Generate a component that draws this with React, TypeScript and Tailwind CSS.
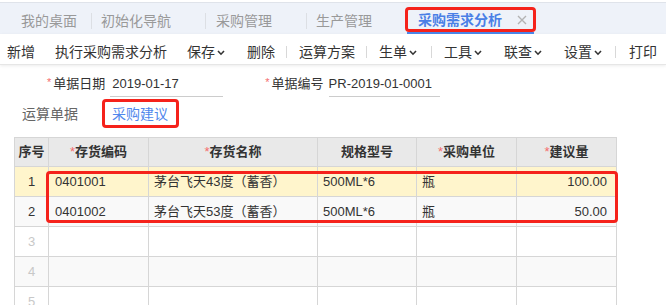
import React from 'react';

const Chevron: React.FC = () => (
  <svg width="8" height="6" viewBox="0 0 8 6" className="ml-[2px] mt-[3px]">
    <polyline points="1,1 4,4.2 7,1" fill="none" stroke="#333" strokeWidth="1.6" />
  </svg>
);

const ToolSep: React.FC<{ ml: string }> = ({ ml }) => (
  <span className={`${ml} w-px h-[12px] bg-[#d8d8d8]`} />
);

const rows = [
  { no: 1, code: '0401001', name: '茅台飞天43度（蓄香）', spec: '500ML*6', unit: '瓶', qty: '100.00' },
  { no: 2, code: '0401002', name: '茅台飞天53度（蓄香）', spec: '500ML*6', unit: '瓶', qty: '50.00' },
  { no: 3 },
  { no: 4 },
  { no: 5 },
  { no: 6 },
] as { no: number; code?: string; name?: string; spec?: string; unit?: string; qty?: string }[];

const App: React.FC = () => {
  return (
    <div className="w-[666px] h-[305px] overflow-hidden bg-white text-[#333] font-['Liberation_Sans','Noto_Sans_CJK_SC',sans-serif]">
      {/* top tab bar */}
      <div className="pt-[2px]">
        <div className="h-[32px] border-t border-[#dfe3ea] bg-[#eef2f9] flex items-start text-[14px] leading-[20px] text-[#999]">
          <span className="ml-[21px] mt-[8px]">我的桌面</span>
          <span className="ml-[14px] mt-[10px] w-px h-[16px] bg-[#dcdfe4]" />
          <span className="ml-[9px] mt-[8px]">初始化导航</span>
          <span className="ml-[34px] mt-[10px] w-px h-[16px] bg-[#dcdfe4]" />
          <span className="ml-[10px] mt-[8px]">采购管理</span>
          <span className="ml-[34px] mt-[10px] w-px h-[16px] bg-[#dcdfe4]" />
          <span className="ml-[9px] mt-[8px]">生产管理</span>
          <div className="ml-[33px] mt-[4px] flex flex-col">
            <div className="h-[25px] w-[131px] border-[3px] border-[#f5221b] rounded-[4px] flex items-center pl-[10px]">
              <span className="text-[#4a7fe6] font-bold">采购需求分析</span>
              <svg width="10" height="10" viewBox="0 0 10 10" className="ml-[15px]">
                <path d="M1 1 L9 9 M9 1 L1 9" stroke="#b3b3b3" strokeWidth="1.4" />
              </svg>
            </div>
            <div className="mx-[2px] h-[2px] bg-[#4a86e8]" />
          </div>
        </div>
      </div>

      {/* toolbar */}
      <div className="h-[31px] pt-[5px] flex items-center text-[14px] leading-[20px] border-b border-[#e6e6e6] shadow-[0_1px_3px_rgba(0,0,0,0.08)] whitespace-nowrap">
        <span className="ml-[7px]">新增</span>
        <span className="ml-[20px]">执行采购需求分析</span>
        <span className="ml-[20px] flex items-center">保存<Chevron /></span>
        <span className="ml-[22px]">删除</span>
        <ToolSep ml="ml-[11px]" />
        <span className="ml-[12px]">运算方案</span>
        <ToolSep ml="ml-[11px]" />
        <span className="ml-[12px] flex items-center">生单<Chevron /></span>
        <ToolSep ml="ml-[14px]" />
        <span className="ml-[12px] flex items-center">工具<Chevron /></span>
        <span className="ml-[22px] flex items-center">联查<Chevron /></span>
        <span className="ml-[22px] flex items-center">设置<Chevron /></span>
        <ToolSep ml="ml-[13px]" />
        <span className="ml-[13px]">打印</span>
      </div>

      {/* form fields */}
      <div className="pt-[10px] flex items-start text-[13px] leading-[18px]">
        <div className="ml-[47px] flex items-start">
          <span className="text-[#f56c6c] text-[11px] leading-[14px]">*</span>
          <span className="ml-[2px]">单据日期</span>
          <div className="ml-[5px] w-[113px] pl-[2px] pb-[3px] border-b border-[#cccccc]">2019-01-17</div>
        </div>
        <div className="ml-[42px] flex items-start">
          <span className="text-[#f56c6c] text-[11px] leading-[14px]">*</span>
          <span className="ml-[2px]">单据编号</span>
          <div className="ml-[5px] w-[111px] pb-[3px] border-b border-[#cccccc]">PR-2019-01-0001</div>
        </div>
      </div>

      {/* sub tabs */}
      <div className="mt-[2px] h-[29px] flex items-center text-[14px] leading-[20px]">
        <span className="ml-[22px] text-[#666]">运算单据</span>
        <div className="ml-[24px] h-[29px] border-[3px] border-[#f5221b] rounded-[4px] flex items-center pl-[7px] pr-[8px]">
          <span className="text-[#4f87ec]">采购建议</span>
        </div>
      </div>

      {/* grid */}
      <div className="relative ml-[14px] mt-[9px] w-[602px]">
        <table className="table-fixed border-collapse w-[602px] text-[13px] leading-[18px]">
          <colgroup>
            <col className="w-[34px]" />
            <col className="w-[100px]" />
            <col className="w-[169px]" />
            <col className="w-[99px]" />
            <col className="w-[100px]" />
            <col className="w-[100px]" />
          </colgroup>
          <thead>
            <tr className="h-[29px] bg-[#e9e9e9]">
              <th className="border border-[#d6d6d6] font-bold">序号</th>
              <th className="border border-[#d6d6d6] font-bold"><span className="text-[#f56c6c] font-normal">*</span>存货编码</th>
              <th className="border border-[#d6d6d6] font-bold"><span className="text-[#f56c6c] font-normal">*</span>存货名称</th>
              <th className="border border-[#d6d6d6] font-bold">规格型号</th>
              <th className="border border-[#d6d6d6] font-bold"><span className="text-[#f56c6c] font-normal">*</span>采购单位</th>
              <th className="border border-[#d6d6d6] font-bold"><span className="text-[#f56c6c] font-normal">*</span>建议量</th>
            </tr>
          </thead>
          <tbody>
            {rows.map(r => (
              <tr
                key={r.no}
                className={
                  r.no === 1 ? 'h-[30px] bg-[#fff5cc]' : r.no % 2 === 0 ? 'h-[30px] bg-[#f9f9f9]' : 'h-[30px] bg-white'
                }>
                <td className={`border border-[#d6d6d6] text-center ${r.code ? 'text-[#333]' : 'text-[#c8c8c8]'}`}>{r.no}</td>
                <td className="border border-[#d6d6d6] pl-[6px]">{r.code}</td>
                <td className="border border-[#d6d6d6] pl-[5px] whitespace-nowrap">{r.name}</td>
                <td className="border border-[#d6d6d6] pl-[5px]">{r.spec}</td>
                <td className="border border-[#d6d6d6] pl-[5px]">{r.unit}</td>
                <td className="border border-[#d6d6d6] pr-[9px] text-right">{r.qty}</td>
              </tr>
            ))}
          </tbody>
        </table>
        {/* annotation box over the data rows */}
        <div className="absolute left-[32px] top-[34px] w-[572px] h-[52px] border-[3px] border-[#f5221b] rounded-[4px]" />
      </div>
    </div>
  );
};

export default App;
